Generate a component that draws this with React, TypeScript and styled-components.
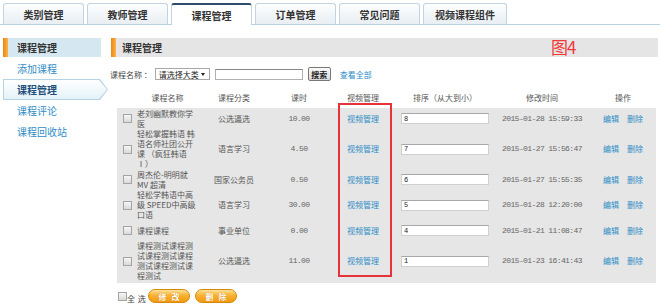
import React from 'react';
import styled, { createGlobalStyle } from 'styled-components';

const GlobalStyle = createGlobalStyle`
  html, body { margin: 0; padding: 0; background: #fff; }
  body { font-family: "Noto Sans CJK SC", "Liberation Sans", sans-serif; color: #333; }
  * { box-sizing: border-box; }
`;

const LINK = '#2e8dc6';

const Page = styled.div`
  width: 660px;
  height: 308px;
  overflow: hidden;
`;

const TabBar = styled.div`
  display: flex;
  align-items: flex-end;
  gap: 3px;
  height: 25px;
  padding-left: 3px;
  border-bottom: 1px solid #b9d0e0;
`;

const Tab = styled.div<{ $active?: boolean; $w: number }>`
  position: relative;
  width: ${p => p.$w}px;
  height: ${p => (p.$active ? 22 : 21)}px;
  margin-bottom: ${p => (p.$active ? -1 : 0)}px;
  display: flex;
  align-items: center;
  justify-content: center;
  font-size: 10px;
  font-weight: bold;
  color: #333;
  border: 1px solid #c3d3df;
  border-bottom: none;
  border-top: ${p => (p.$active ? '2px solid #2d4b6b' : '1px solid #c3d3df')};
  border-radius: 3px 3px 0 0;
  background: ${p => (p.$active ? '#fff' : 'linear-gradient(#fdfefe, #e8eef3)')};
`;

const Body = styled.div`
  display: flex;
  padding-top: 13px;
`;

const Sidebar = styled.div`
  width: 110px;
  padding-left: 3px;
  display: flex;
  flex-direction: column;
`;

const SideHead = styled.div`
  width: 98px;
  height: 19px;
  margin-bottom: 1px;
  display: flex;
  align-items: center;
  padding-left: 14px;
  font-size: 10px;
  font-weight: bold;
  color: #333;
  background: linear-gradient(to right, #ee8410, #f9b548 5px, #d5e8f1 5px);
`;

const SideLink = styled.a`
  height: 21px;
  display: flex;
  align-items: center;
  padding-left: 14px;
  font-size: 10px;
  color: ${LINK};
  text-decoration: none;
`;

const arrowClip = 'polygon(0 0, calc(100% - 8px) 0, 100% 50%, calc(100% - 8px) 100%, 0 100%)';

const SideActive = styled.div`
  width: 105px;
  height: 21px;
  padding: 1px;
  background: #b4d4e5;
  clip-path: ${arrowClip};
`;

const SideActiveInner = styled.div`
  height: 100%;
  display: flex;
  align-items: center;
  padding-left: 13px;
  font-size: 10px;
  font-weight: bold;
  color: #1f4f7a;
  background: linear-gradient(#ffffff, #e4f2f9);
  clip-path: ${arrowClip};
`;

const Main = styled.div`
  width: 548px;
  display: flex;
  flex-direction: column;
`;

const MainHead = styled.div`
  position: relative;
  height: 19px;
  margin-left: 1px;
  display: flex;
  align-items: center;
  padding-left: 11px;
  font-size: 10px;
  font-weight: bold;
  color: #333;
  background: linear-gradient(to right, #ee8410, #f9b548 5px, #e5e5e5 5px);
`;

const FigLabel = styled.span`
  position: absolute;
  left: 440px;
  top: -1px;
  font-size: 17px;
  font-weight: normal;
  line-height: 19px;
  color: #f03a3a;
  letter-spacing: -1px;
`;

const SearchRow = styled.div`
  display: flex;
  align-items: center;
  height: 14px;
  margin-top: 10px;
  font-size: 8px;
  color: #444;
`;

const SelectBox = styled.div`
  position: relative;
  width: 55px;
  height: 12px;
  margin-left: 3px;
  padding-left: 3px;
  display: flex;
  align-items: center;
  border: 1px solid #a8a8a8;
  background: #fff;
  color: #222;
  font-size: 8px;
  &::after {
    content: '';
    position: absolute;
    right: 4px;
    top: 4px;
    border-left: 2.5px solid transparent;
    border-right: 2.5px solid transparent;
    border-top: 3px solid #222;
  }
`;

const TextInput = styled.div`
  width: 88px;
  height: 11px;
  margin-left: 5px;
  border: 1px solid #b0b0b0;
  border-top-color: #888;
  background: #fff;
`;

const SearchBtn = styled.div`
  width: 23px;
  height: 14px;
  margin-left: 5px;
  display: flex;
  align-items: center;
  justify-content: center;
  font-size: 8px;
  font-weight: bold;
  color: #222;
  border: 1px solid #777;
  border-radius: 2px;
  background: linear-gradient(#fbfbfb, #d8d8d8);
`;

const Link = styled.a`
  color: ${LINK};
  font-size: 8px;
  text-decoration: none;
  white-space: nowrap;
`;

const SearchLink = styled(Link)`
  margin-left: 9px;
`;

const Table = styled.div`
  position: relative;
  width: 539px;
  margin-left: 7px;
  margin-top: 6px;
`;

const cols = '18px 65px 68px 62px 66px 98px 96px 66px';

const HeadRow = styled.div`
  display: grid;
  grid-template-columns: ${cols};
  height: 21px;
  align-items: center;
  font-size: 8px;
  color: #555;
  text-align: center;
`;

const Rows = styled.div`
  background: #e6e6e6;
  padding-bottom: 2px;
`;

const Row = styled.div`
  display: grid;
  grid-template-columns: ${cols};
  min-height: 21px;
  align-items: center;
  font-size: 8px;
  line-height: 10px;
  color: #555;
`;

const Cell = styled.div`
  display: flex;
  justify-content: center;
  align-items: center;
  white-space: nowrap;
`;

const CheckCell = styled.div`
  display: flex;
  align-items: center;
  padding-left: 6px;
`;

const Check = styled.input.attrs({ type: 'checkbox' })`
  appearance: none;
  margin: 0;
  width: 9px;
  height: 9px;
  border: 1px solid #a4a4a4;
  background: linear-gradient(#f6f6f6, #dadada);
`;

const NameCell = styled.div`
  padding-left: 2px;
  white-space: nowrap;
`;

const Mono = styled.span`
  font-family: "Liberation Mono", monospace;
  font-size: 8px;
  letter-spacing: -0.6px;
  color: #666;
`;

const SortInput = styled.div`
  width: 88px;
  height: 11px;
  display: flex;
  align-items: center;
  padding-left: 2px;
  border: 1px solid #d0d0d0;
  border-top-color: #a8a8a8;
  background: #fff;
  font-family: "Liberation Mono", monospace;
  font-size: 7px;
  color: #222;
`;

const Ops = styled.div`
  display: flex;
  justify-content: center;
  gap: 8px;
`;

const Highlight = styled.div`
  position: absolute;
  left: 221px;
  top: 16px;
  width: 54px;
  height: 174px;
  border: 2px solid #e8323a;
  pointer-events: none;
`;

const Footer = styled.div`
  display: flex;
  align-items: center;
  height: 14px;
  margin-top: 6px;
  margin-left: 8px;
`;

const AllLabel = styled.span`
  font-size: 8px;
  color: #444;
  margin-left: 0;
  margin-top: 5px;
  width: 21px;
  word-spacing: 1px;
`;

const OrangeBtn = styled.div`
  width: 42px;
  height: 14px;
  margin-right: 5px;
  display: flex;
  align-items: center;
  justify-content: center;
  padding-left: 5px;
  font-size: 8px;
  font-weight: bold;
  letter-spacing: 5px;
  color: #fff;
  text-shadow: 0 0 1px #c87000;
  border: 1px solid #d8880a;
  border-radius: 7px;
  background: linear-gradient(#fde39a, #f8b232 45%, #f39a10);
`;

const tabs = [
  { t: '类别管理', w: 81 },
  { t: '教师管理', w: 81 },
  { t: '课程管理', w: 81, active: true },
  { t: '订单管理', w: 81 },
  { t: '常见问题', w: 81 },
  { t: '视频课程组件', w: 84 },
];

const rows = [
  { name: ['老刘幽默教你学', '医'], cat: '公选逼选', hours: '10.00', sort: '8', time: '2015-01-28 15:59:33' },
  { name: ['轻松掌握韩语 韩', '语名师社团公开', '课 （疯狂韩语', 'Ⅰ）'], cat: '语言学习', hours: '4.50', sort: '7', time: '2015-01-27 15:56:47' },
  { name: ['周杰伦-明明就', 'MV 超清'], cat: '国家公务员', hours: '0.50', sort: '6', time: '2015-01-27 15:55:35' },
  { name: ['轻松学韩语中高', '级 SPEED中高级', '口语'], cat: '语言学习', hours: '30.00', sort: '5', time: '2015-01-28 12:20:00' },
  { name: ['课程课程'], cat: '事业单位', hours: '0.00', sort: '4', time: '2015-01-21 11:08:47' },
  { name: ['课程测试课程测', '试课程测试课程', '测试课程测试课', '程测试'], cat: '公选逼选', hours: '11.00', sort: '1', time: '2015-01-23 16:41:43' },
];

export default function App() {
  return (
    <Page>
      <GlobalStyle />
      <TabBar>
        {tabs.map(t => (
          <Tab key={t.t} $w={t.w} $active={t.active}>{t.t}</Tab>
        ))}
      </TabBar>
      <Body>
        <Sidebar>
          <SideHead>课程管理</SideHead>
          <SideLink>添加课程</SideLink>
          <SideActive><SideActiveInner>课程管理</SideActiveInner></SideActive>
          <SideLink>课程评论</SideLink>
          <SideLink>课程回收站</SideLink>
        </Sidebar>
        <Main>
          <MainHead>
            课程管理
            <FigLabel>图4</FigLabel>
          </MainHead>
          <SearchRow>
            <span>课程名称 ：</span>
            <SelectBox>请选择大类</SelectBox>
            <TextInput />
            <SearchBtn>搜索</SearchBtn>
            <SearchLink>查看全部</SearchLink>
          </SearchRow>
          <Table>
            <HeadRow>
              <span />
              <span>课程名称</span>
              <span>课程分类</span>
              <span>课时</span>
              <span>视频管理</span>
              <span>排序（从大到小）</span>
              <span>修改时间</span>
              <span>操作</span>
            </HeadRow>
            <Rows>
              {rows.map((r, i) => (
                <Row key={i}>
                  <CheckCell><Check /></CheckCell>
                  <NameCell>
                    {r.name.map((l, j) => (
                      <div key={j}>{l}</div>
                    ))}
                  </NameCell>
                  <Cell>{r.cat}</Cell>
                  <Cell><Mono>{r.hours}</Mono></Cell>
                  <Cell><Link>视频管理</Link></Cell>
                  <Cell><SortInput>{r.sort}</SortInput></Cell>
                  <Cell><Mono>{r.time}</Mono></Cell>
                  <Ops><Link>编辑</Link><Link>删除</Link></Ops>
                </Row>
              ))}
            </Rows>
            <Highlight />
          </Table>
          <Footer>
            <Check />
            <AllLabel>全 选</AllLabel>
            <OrangeBtn>修改</OrangeBtn>
            <OrangeBtn>删除</OrangeBtn>
          </Footer>
        </Main>
      </Body>
    </Page>
  );
}
